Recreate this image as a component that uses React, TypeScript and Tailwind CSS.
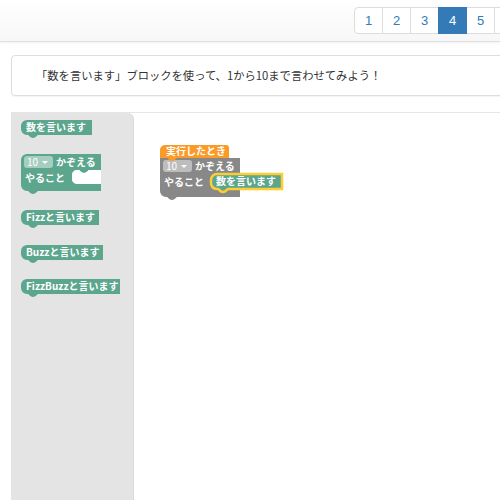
import React from 'react';

const GREEN = '#5ba68d';
const GRAY = '#888888';
const ORANGE = '#fa9a28';
const FONT = '"Noto Sans CJK JP", "Liberation Sans", sans-serif';

// bottom "next" tab drawn right-to-left along the lower edge
const tab = (x: number) => `H${x + 10} c-1,0 -2,3 -5,3 s-4,-3 -5,-3`;

function stmtPath(w: number, h: number, round = 6) {
  return `M${round},0 H${w} V${h} ${tab(7)} H${round} a${round},${round} 0 0 1 -${round},-${round} V${round} a${round},${round} 0 0 1 ${round},-${round} Z`;
}

function hatPath(w: number, h: number) {
  return `M5,0 H${w - 3} a3,3 0 0 1 3,3 V${h} ${tab(7)} H0 V5 a5,5 0 0 1 5,-5 Z`;
}

function loopPath(w: number, arm: number, mouth: number, roundTop: boolean) {
  const top = 16;
  const bottom = top + mouth + 7;
  const start = roundTop ? `M6,0` : `M0,0`;
  const corner = roundTop ? `V6 a6,6 0 0 1 6,-6` : `V0`;
  return (
    `${start} H${w} V${top} ${tab(arm + 7)} H${arm + 5} a5,5 0 0 0 -5,5 ` +
    `V${top + mouth - 5} a5,5 0 0 0 5,5 H${w} V${bottom} ${tab(7)} H6 a6,6 0 0 1 -6,-6 ${corner} Z`
  );
}

// empty statement slot of a loop block
function mouthPath(w: number, arm: number, mouth: number) {
  const top = 16;
  return `M${w},${top} ${tab(arm + 7)} H${arm + 5} a5,5 0 0 0 -5,5 V${top + mouth - 5} a5,5 0 0 0 5,5 H${w} Z`;
}

function Say({ x, y, w, label, selected }: { x: number; y: number; w: number; label: string; selected?: boolean }) {
  return (
    <g transform={`translate(${x},${y})`}>
      <path
        d={stmtPath(w, 15)}
        fill={GREEN}
        stroke={selected ? '#ffcc33' : 'none'}
        strokeWidth={selected ? 2.5 : 0}
      />
      <text x={5} y={11} fill="#fff" fontSize={10} fontWeight={700} fontFamily={FONT}>
        {label}
      </text>
    </g>
  );
}

function Loop({ x, y, color, mouth, roundTop, empty }: { x: number; y: number; color: string; mouth: number; roundTop: boolean; empty?: boolean }) {
  return (
    <g transform={`translate(${x},${y})`}>
      <path d={loopPath(80, 51, mouth, roundTop)} fill={color} />
      {empty && <path d={mouthPath(80, 51, mouth)} fill="#fff" />}
      <rect x={3} y={2} width={29} height={12} rx={3} fill="#fff" fillOpacity={0.45} />
      <text x={6} y={11.5} fill="#fff" fontSize={10} fontFamily={FONT}>10</text>
      <path d="M21,7 h6 l-3,3 z" fill="#fff" />
      <text x={35} y={11.5} fill="#fff" fontSize={10} fontWeight={700} fontFamily={FONT}>かぞえる</text>
      <text x={4} y={28} fill="#fff" fontSize={10} fontWeight={700} fontFamily={FONT}>やること</text>
    </g>
  );
}

export default function App() {
  const pages = [1, 2, 3, 4, 5, 6];
  const current = 4;

  return (
    <div className="w-[500px] h-[500px] overflow-hidden bg-white flex flex-col" style={{ fontFamily: FONT }}>
      {/* top bar with pager */}
      <header className="h-[42px] shrink-0 bg-gradient-to-b from-white to-[#f7f7f7] border-b border-[#e0e0e0] shadow-[0_1px_2px_rgba(0,0,0,0.06)] flex pt-[7px] pl-[354px]">
        <nav className="flex shrink-0 h-[27px]">
          {pages.map((p, i) => (
            <a
              key={p}
              className={
                'w-[29px] h-[27px] flex items-center justify-center border text-[13px] font-["Liberation_Sans",sans-serif] ' +
                (i > 0 ? '-ml-px ' : 'rounded-l-[4px] ') +
                (p === current
                  ? 'bg-[#337ab7] border-[#337ab7] text-white relative z-10'
                  : 'bg-white border-[#dddddd] text-[#337ab7]')
              }
            >
              {p}
            </a>
          ))}
        </nav>
      </header>

      {/* task description */}
      <div className="pl-[11px] pt-[13px] shrink-0">
        <div className="w-[600px] h-[41px] border border-[#dddddd] rounded-[4px] shadow-[0_1px_1px_rgba(0,0,0,0.05)] flex items-center pl-[24px] text-[11.3px] text-[#333333]">
          「数を言います」ブロックを使って、1から10まで言わせてみよう！
        </div>
      </div>

      {/* blockly area */}
      <div className="mt-[16px] ml-[11px] flex-1 flex border-t border-[#e6e6e6]">
        <div className="w-[123px] shrink-0 bg-[#e4e4e4] rounded-tr-[6px] border-r border-[#dadada] relative">
          <svg className="absolute inset-0" width={123} height={388}>
            <Say x={10} y={7} w={71} label="数を言います" />
            <Loop x={10} y={41} color={GREEN} mouth={14} roundTop empty />
            <Say x={10} y={97} w={78} label="Fizzと言います" />
            <Say x={10} y={132} w={82} label="Buzzと言います" />
            <Say x={10} y={166} w={99} label="FizzBuzzと言います" />
          </svg>
        </div>
        <div className="flex-1 relative bg-white">
          <svg className="absolute inset-0" width={400} height={388}>
            <Loop x={26} y={45} color={GRAY} mouth={16} roundTop={false} />
            <g transform="translate(26,32)">
              <path d={hatPath(69, 13)} fill={ORANGE} />
              <text x={6} y={10} fill="#fff" fontSize={10} fontWeight={700} fontFamily={FONT}>実行したとき</text>
            </g>
            <Say x={77} y={61} w={71} label="数を言います" selected />
          </svg>
        </div>
      </div>
    </div>
  );
}
